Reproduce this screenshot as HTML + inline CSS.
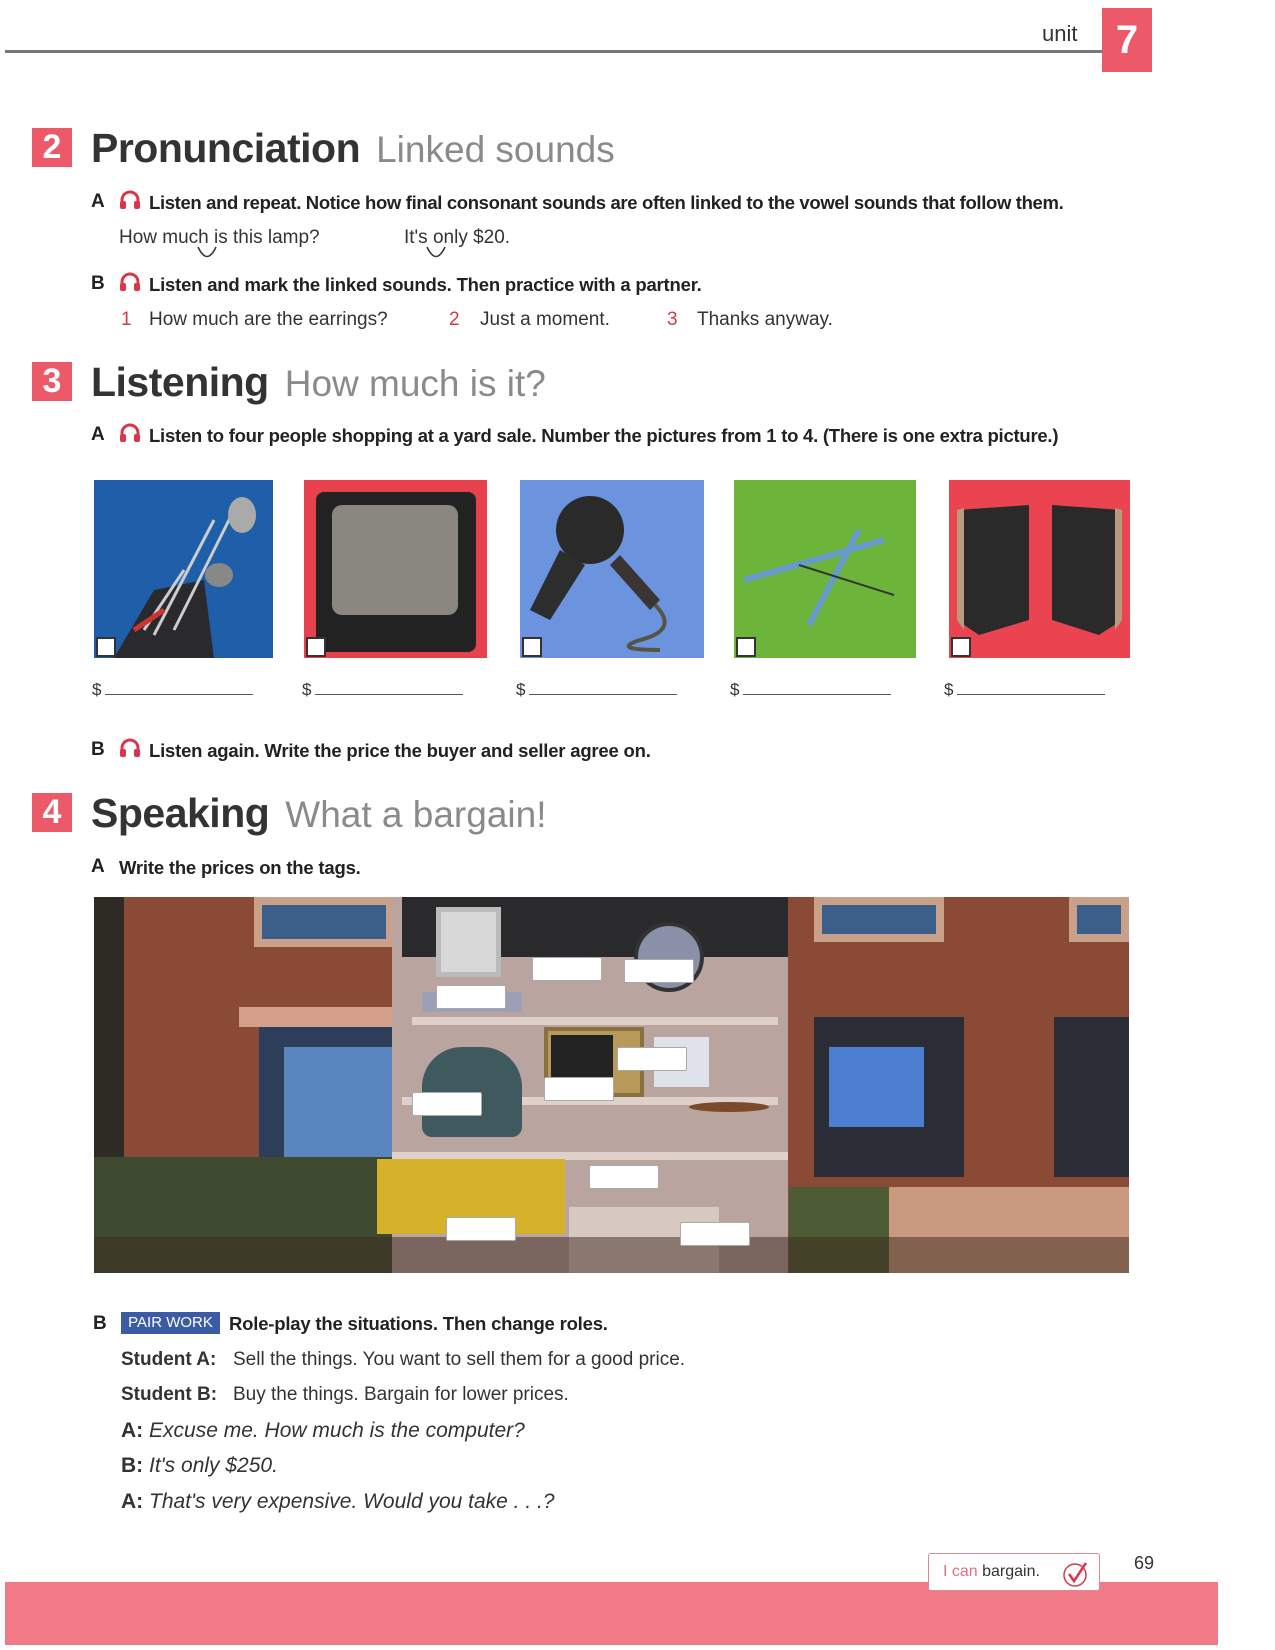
<!DOCTYPE html>
<html><head><meta charset="utf-8">
<style>
*{margin:0;padding:0;box-sizing:border-box}
body{width:1275px;height:1650px;background:#fff;position:relative;font-family:"Liberation Sans",sans-serif;color:#222;overflow:hidden}
.a{position:absolute;white-space:nowrap}
.num{position:absolute;width:40px;height:39px;background:#ec5a6a;color:#fff;font-size:34px;font-weight:bold;text-align:center;line-height:39px}
.h{position:absolute;font-size:41px;font-weight:bold;color:#333;letter-spacing:-0.5px;line-height:44px}
.h span{font-weight:normal;color:#8a8a8a;font-size:37px;margin-left:16px;letter-spacing:0}
.ins{font-size:18.5px;font-weight:bold;color:#222;letter-spacing:-0.2px}
.lt{font-size:19px;font-weight:bold;color:#222}
.body{font-size:19px;color:#333}
.red{color:#d23a4c}
.pic{position:absolute;top:480px;height:178px}
.cb{position:absolute;left:2px;bottom:1px;width:20px;height:20px;background:#fff;border:2px solid #333}
.dl{position:absolute;top:680px;font-size:17px;color:#333}
.dl i{display:inline-block;width:148px;border-bottom:1px solid #555;margin-left:4px}
.tag{position:absolute;background:#fff;border:1px solid #aaa;width:70px;height:24px;border-radius:2px}
.hand{font-family:"Liberation Sans",sans-serif;font-style:italic;font-size:21px;color:#333}
</style></head><body>

<div class="a" style="left:1042px;top:21px;font-size:22px;color:#333">unit</div>
<div class="a" style="left:1102px;top:8px;width:50px;height:64px;background:#ec5a6a;color:#fff;font-size:40px;font-weight:bold;text-align:center;line-height:64px">7</div>
<div class="a" style="left:5px;top:50px;width:1097px;height:3px;background:#777"></div>

<!-- Section 2 -->
<div class="num" style="left:32px;top:128px">2</div>
<div class="h" style="left:91px;top:126px">Pronunciation<span>Linked sounds</span></div>

<svg class="a" style="left:119px;top:190px" width="22" height="20" viewBox="0 0 22 20"><path d="M3 15 V10 A8 8 0 0 1 19 10 V15" fill="none" stroke="#d9364a" stroke-width="3"/><rect x="1" y="11" width="6" height="8" rx="2" fill="#d9364a"/><rect x="15" y="11" width="6" height="8" rx="2" fill="#d9364a"/></svg>
<div class="a lt" style="left:91px;top:191px">A</div>
<div class="a ins" style="left:149px;top:192px;letter-spacing:-0.35px">Listen and repeat. Notice how final consonant sounds are often linked to the vowel sounds that follow them.</div>

<div class="a body" style="left:119px;top:227px">How much is this lamp?</div>
<div class="a body" style="left:404px;top:227px">It's only $20.</div>
<svg class="a" style="left:196px;top:246px" width="22" height="14"><path d="M2 1 Q11 20 20 1" fill="none" stroke="#333" stroke-width="1.5"/></svg>
<svg class="a" style="left:425px;top:246px" width="22" height="14"><path d="M2 1 Q11 20 20 1" fill="none" stroke="#333" stroke-width="1.5"/></svg>

<svg class="a" style="left:119px;top:272px" width="22" height="20" viewBox="0 0 22 20"><path d="M3 15 V10 A8 8 0 0 1 19 10 V15" fill="none" stroke="#d9364a" stroke-width="3"/><rect x="1" y="11" width="6" height="8" rx="2" fill="#d9364a"/><rect x="15" y="11" width="6" height="8" rx="2" fill="#d9364a"/></svg>
<div class="a lt" style="left:91px;top:273px">B</div>
<div class="a ins" style="left:149px;top:274px">Listen and mark the linked sounds. Then practice with a partner.</div>

<div class="a body" style="left:121px;top:309px"><span class="red">1</span></div>
<div class="a body" style="left:149px;top:309px">How much are the earrings?</div>
<div class="a body" style="left:449px;top:309px"><span class="red">2</span></div>
<div class="a body" style="left:480px;top:309px">Just a moment.</div>
<div class="a body" style="left:667px;top:309px"><span class="red">3</span></div>
<div class="a body" style="left:697px;top:309px">Thanks anyway.</div>

<!-- Section 3 -->
<div class="num" style="left:32px;top:362px">3</div>
<div class="h" style="left:91px;top:360px">Listening<span>How much is it?</span></div>

<svg class="a" style="left:119px;top:423px" width="22" height="20" viewBox="0 0 22 20"><path d="M3 15 V10 A8 8 0 0 1 19 10 V15" fill="none" stroke="#d9364a" stroke-width="3"/><rect x="1" y="11" width="6" height="8" rx="2" fill="#d9364a"/><rect x="15" y="11" width="6" height="8" rx="2" fill="#d9364a"/></svg>
<div class="a lt" style="left:91px;top:424px">A</div>
<div class="a ins" style="left:149px;top:425px;letter-spacing:-0.25px">Listen to four people shopping at a yard sale. Number the pictures from 1 to 4. (There is one extra picture.)</div>

<div class="pic" style="left:94px;width:179px;background:#1f5ea8">
 <svg width="179" height="178"><path d="M20 178 L60 110 L110 100 L120 178Z" fill="#2a2a2e"/><path d="M50 150 L90 90 M60 155 L120 40 M80 150 L140 30" stroke="#ccc" stroke-width="3"/><ellipse cx="148" cy="35" rx="14" ry="18" fill="#aaa"/><ellipse cx="125" cy="95" rx="14" ry="12" fill="#888"/><path d="M40 150 L70 130" stroke="#c33" stroke-width="5"/></svg>
 <div class="cb"></div></div>
<div class="pic" style="left:304px;width:183px;background:#e8414e">
 <svg width="183" height="178"><rect x="12" y="12" width="160" height="160" rx="8" fill="#222"/><rect x="28" y="25" width="126" height="110" rx="10" fill="#8a8780"/></svg>
 <div class="cb"></div></div>
<div class="pic" style="left:520px;width:184px;background:#6c93dd">
 <svg width="184" height="178"><circle cx="70" cy="50" r="34" fill="#2b2a2a"/><path d="M40 70 L10 130 L30 140 L65 85Z" fill="#2e2d2d"/><path d="M100 75 L140 120 L130 130 L90 85Z" fill="#3a3533"/><path d="M135 125 Q160 150 120 160 Q90 170 140 170" stroke="#554" stroke-width="4" fill="none"/></svg>
 <div class="cb"></div></div>
<div class="pic" style="left:734px;width:182px;background:#6db53a">
 <svg width="182" height="178"><path d="M10 100 L150 60" stroke="#6699cc" stroke-width="6"/><path d="M75 145 L125 50" stroke="#6699cc" stroke-width="6"/><path d="M65 85 L160 115" stroke="#333" stroke-width="2"/></svg>
 <div class="cb"></div></div>
<div class="pic" style="left:949px;width:181px;background:#e94450">
 <svg width="181" height="178"><path d="M8 30 L80 25 L80 140 L30 155 L8 140Z" fill="#2a2a2a"/><path d="M103 25 L173 30 L173 140 L150 155 L103 140Z" fill="#2a2a2a"/><path d="M8 30 L15 28 L15 150 L8 140Z" fill="#b89a80"/><path d="M166 28 L173 30 L173 140 L166 150Z" fill="#b89a80"/></svg>
 <div class="cb"></div></div>

<div class="dl" style="left:92px">$<i></i></div>
<div class="dl" style="left:302px">$<i></i></div>
<div class="dl" style="left:516px">$<i></i></div>
<div class="dl" style="left:730px">$<i></i></div>
<div class="dl" style="left:944px">$<i></i></div>

<svg class="a" style="left:119px;top:738px" width="22" height="20" viewBox="0 0 22 20"><path d="M3 15 V10 A8 8 0 0 1 19 10 V15" fill="none" stroke="#d9364a" stroke-width="3"/><rect x="1" y="11" width="6" height="8" rx="2" fill="#d9364a"/><rect x="15" y="11" width="6" height="8" rx="2" fill="#d9364a"/></svg>
<div class="a lt" style="left:91px;top:739px">B</div>
<div class="a ins" style="left:149px;top:740px">Listen again. Write the price the buyer and seller agree on.</div>

<!-- Section 4 -->
<div class="num" style="left:32px;top:793px">4</div>
<div class="h" style="left:91px;top:791px">Speaking<span>What a bargain!</span></div>
<div class="a lt" style="left:91px;top:856px">A</div>
<div class="a ins" style="left:119px;top:857px">Write the prices on the tags.</div>

<!-- scene -->
<div class="a" style="left:94px;top:897px;width:1035px;height:376px;background:#8a4a36;overflow:hidden">
 <div class="a" style="left:0;top:0;width:30px;height:376px;background:#2e2a24"></div>
 <div class="a" style="left:160px;top:0;width:140px;height:50px;background:#3c5f8a;border:8px solid #c9a08a"></div>
 <div class="a" style="left:720px;top:0;width:130px;height:45px;background:#3c5f8a;border:8px solid #c9a08a"></div>
 <div class="a" style="left:975px;top:0;width:60px;height:45px;background:#3c5f8a;border:8px solid #c9a08a"></div>
 <div class="a" style="left:145px;top:110px;width:240px;height:20px;background:#d4a08a"></div>
 <div class="a" style="left:165px;top:130px;width:200px;height:150px;background:#2c3e5a"></div>
 <div class="a" style="left:190px;top:150px;width:110px;height:110px;background:#5a86c0"></div>
 <div class="a" style="left:720px;top:120px;width:150px;height:160px;background:#2b2d36"></div>
 <div class="a" style="left:735px;top:150px;width:95px;height:80px;background:#4d7fd0"></div>
 <div class="a" style="left:960px;top:120px;width:75px;height:160px;background:#2b2d36"></div>
 <div class="a" style="left:0;top:260px;width:300px;height:116px;background:#3d4a30"></div>
 <div class="a" style="left:745px;top:290px;width:290px;height:86px;background:#c99a80"></div>
 <div class="a" style="left:695px;top:290px;width:100px;height:86px;background:#4d5c34"></div>
 <div class="a" style="left:298px;top:0;width:396px;height:376px;background:#b9a4a0"></div>
 <div class="a" style="left:308px;top:0;width:386px;height:60px;background:#2a2a2c"></div>
 <div class="a" style="left:342px;top:10px;width:65px;height:70px;background:#d8d8d8;border:5px solid #bbb"></div>
 <div class="a" style="left:328px;top:95px;width:100px;height:20px;background:#9aa0b5"></div>
 <div class="a" style="left:540px;top:25px;width:70px;height:70px;border-radius:50%;background:#8a90a8;border:4px solid #333"></div>
 <div class="a" style="left:318px;top:120px;width:366px;height:8px;background:#e0d0cc"></div>
 <div class="a" style="left:308px;top:200px;width:376px;height:8px;background:#e0d0cc"></div>
 <div class="a" style="left:298px;top:255px;width:396px;height:8px;background:#e0d0cc"></div>
 <div class="a" style="left:328px;top:150px;width:100px;height:90px;border-radius:40px 40px 10px 10px;background:#3e5a5e"></div>
 <div class="a" style="left:450px;top:130px;width:100px;height:70px;background:#b79a5a;border:4px solid #8a7040"></div>
 <div class="a" style="left:457px;top:138px;width:62px;height:52px;background:#222"></div>
 <div class="a" style="left:560px;top:140px;width:55px;height:50px;background:#dfe2ea"></div>
 <div class="a" style="left:283px;top:262px;width:188px;height:75px;background:#d6b22a"></div>
 <div class="a" style="left:595px;top:205px;width:80px;height:10px;background:#7a4a2a;border-radius:50%"></div>
 <div class="a" style="left:475px;top:310px;width:150px;height:66px;background:#d8c8c2"></div>
 <div class="a" style="left:0;top:340px;width:1035px;height:36px;background:rgba(60,40,30,.5)"></div>
 <div class="tag" style="left:342px;top:88px"></div>
 <div class="tag" style="left:438px;top:60px"></div>
 <div class="tag" style="left:530px;top:62px"></div>
 <div class="tag" style="left:523px;top:150px"></div>
 <div class="tag" style="left:450px;top:180px"></div>
 <div class="tag" style="left:318px;top:195px"></div>
 <div class="tag" style="left:495px;top:268px"></div>
 <div class="tag" style="left:352px;top:320px"></div>
 <div class="tag" style="left:586px;top:325px"></div>
</div>

<!-- B pair work -->
<div class="a lt" style="left:93px;top:1313px">B</div>
<div class="a" style="left:121px;top:1312px;width:99px;height:22px;background:#3b5ba5;color:#fff;font-size:15px;line-height:22px;text-align:center">PAIR WORK</div>
<div class="a ins" style="left:229px;top:1313px">Role-play the situations. Then change roles.</div>
<div class="a body" style="left:121px;top:1349px;font-weight:bold">Student A:</div>
<div class="a body" style="left:233px;top:1349px">Sell the things. You want to sell them for a good price.</div>
<div class="a body" style="left:121px;top:1384px;font-weight:bold">Student B:</div>
<div class="a body" style="left:233px;top:1384px">Buy the things. Bargain for lower prices.</div>
<div class="a hand" style="left:121px;top:1419px"><b style="font-style:normal">A:</b> Excuse me. How much is the computer?</div>
<div class="a hand" style="left:121px;top:1454px"><b style="font-style:normal">B:</b> It's only $250.</div>
<div class="a hand" style="left:121px;top:1490px"><b style="font-style:normal">A:</b> That's very expensive. Would you take . . .?</div>

<!-- footer -->
<div class="a" style="left:5px;top:1582px;width:1213px;height:63px;background:#f07a85"></div>
<div class="a" style="left:928px;top:1553px;width:172px;height:38px;background:#fff;border:1px solid #e08a95;border-radius:3px;font-size:16px;line-height:36px;padding-left:14px;color:#333"><span style="color:#e07080">I can</span> bargain.</div>
<svg class="a" style="left:1062px;top:1560px" width="28" height="28"><circle cx="13" cy="15" r="11" fill="none" stroke="#d9364a" stroke-width="1.5"/><path d="M7 14 L12 21 L24 3" fill="none" stroke="#d9364a" stroke-width="2.5"/></svg>
<div class="a" style="left:1134px;top:1553px;font-size:18px;color:#333">69</div>

</body></html>
